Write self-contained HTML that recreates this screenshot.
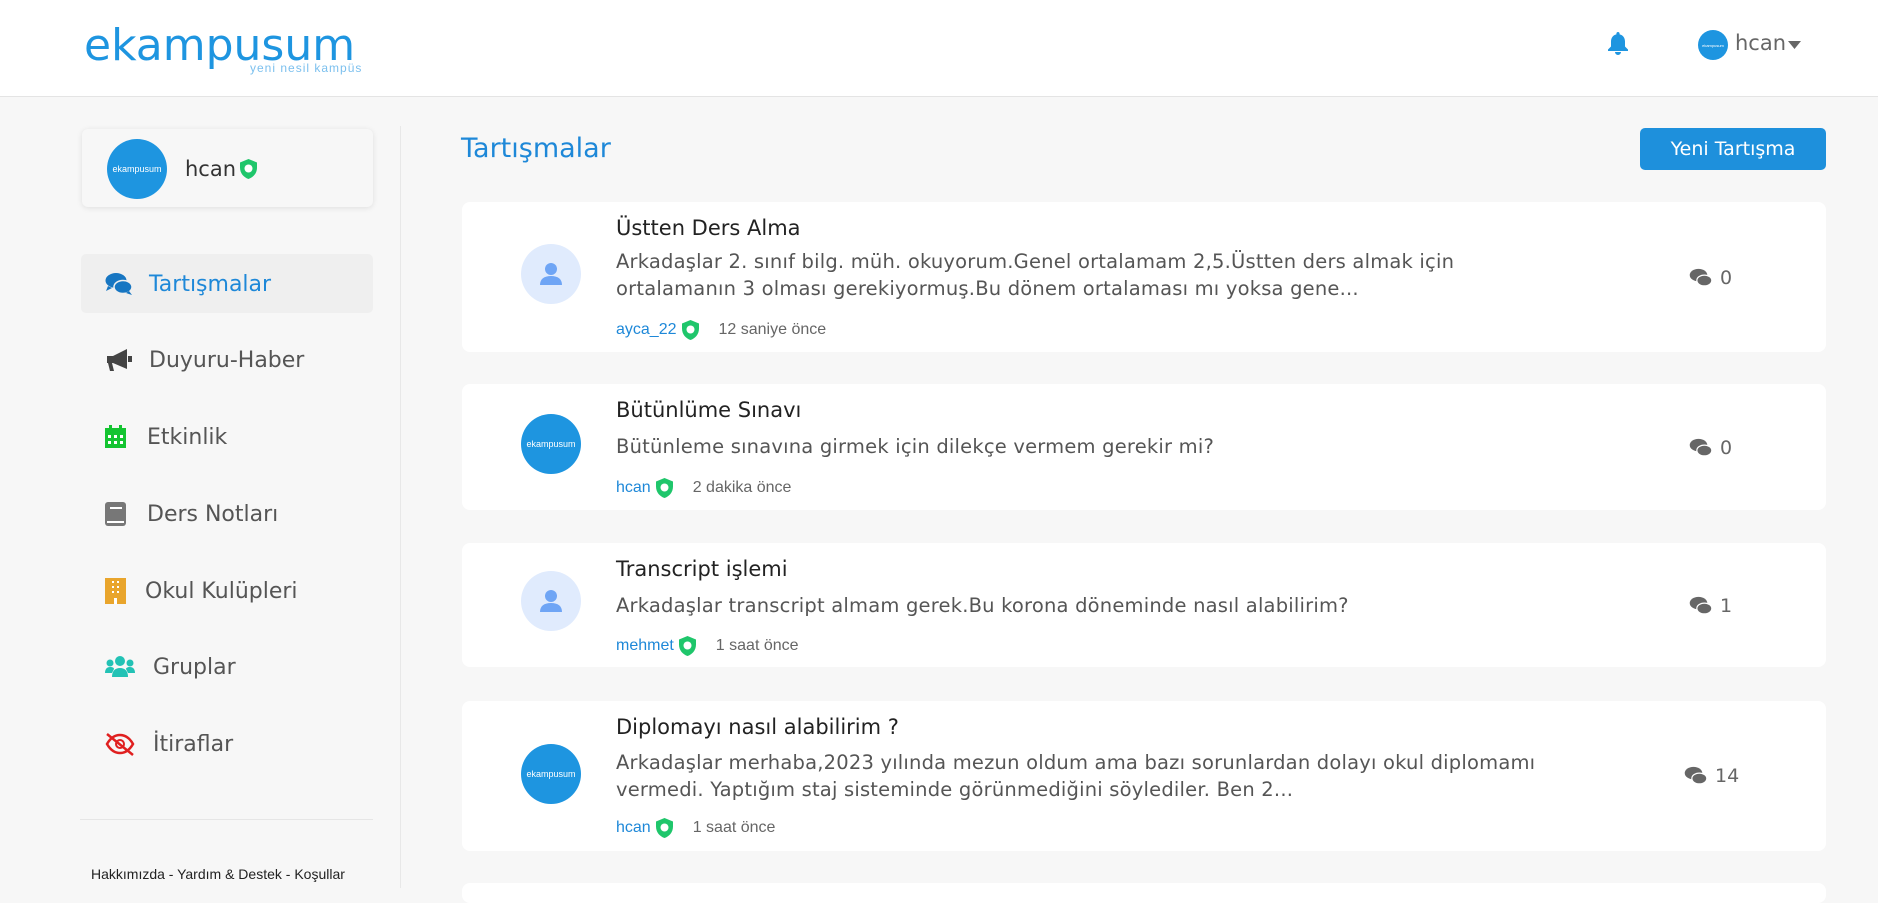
<!DOCTYPE html>
<html><head><meta charset="utf-8"><style>
*{margin:0;padding:0;box-sizing:border-box}
body{width:1878px;height:888px;overflow:hidden;background:#f7f7f7;font-family:"Liberation Sans",sans-serif;position:relative}
.hdr{position:absolute;left:0;top:0;width:1878px;height:97px;background:#fff;border-bottom:1px solid #e4e4e4}
.abs{position:absolute}
.dv{font-family:"DejaVu Sans",sans-serif}
.av{position:absolute;border-radius:50%;background:#1e95e0;color:#fff;font-size:9px;display:flex;align-items:center;justify-content:center}
.nav{position:absolute;left:105px;font-size:22px;color:#555;display:flex;align-items:center;height:40px;font-family:"DejaVu Sans",sans-serif}
.nav svg{margin-right:16px}
.card{position:absolute;left:462px;width:1364px;background:#fff;border-radius:8px}
.t{position:absolute;left:154px;font-size:21px;color:#222;font-family:"DejaVu Sans",sans-serif}
.b{position:absolute;left:154px;font-size:19.5px;color:#555;line-height:27px;font-family:"DejaVu Sans",sans-serif;letter-spacing:0.2px}
.m{position:absolute;left:154px;font-size:16px;display:flex;align-items:center}
.m .u{color:#1e88d8}
.m .d{color:#666;margin-left:20px}
.c{position:absolute;font-size:19px;color:#666;display:flex;align-items:center;font-family:"DejaVu Sans",sans-serif}
.pa{position:absolute;left:-90px;width:60px;height:60px;border-radius:50%}
</style></head><body>
<div class="hdr">
 <div class="abs" style="left:84px;top:20px;font-size:44px;color:#1e95e0;letter-spacing:0px;font-family:'DejaVu Sans',sans-serif">ekampusum</div>
 <div class="abs" style="left:250px;top:61px;font-size:12px;color:#7cc0ee;letter-spacing:1px">yeni nesil kampüs</div>
 <svg class="abs" style="left:1608px;top:32px" width="20" height="24" viewBox="0 0 20 24"><path d="M10 0c1 0 1.6.8 1.6 1.6v.8C15 3 17 6 17 9.5v5l3 3v1.5H0v-1.5l3-3v-5C3 6 5 3 8.4 2.4v-.8C8.4.8 9 0 10 0zM7 20h6a3 3 0 0 1-6 0z" fill="#1e95e0"/></svg>
 <div class="av" style="left:1698px;top:30px;width:30px;height:30px;font-size:4px">ekampusum</div>
 <div class="abs dv" style="left:1735px;top:31px;font-size:21px;color:#666">hcan</div>
 <svg class="abs" style="left:1788px;top:41px" width="13" height="8"><path d="M0 0h13L6.5 8z" fill="#666"/></svg>
</div>
<div class="abs" style="left:82px;top:129px;width:291px;height:78px;background:#f7f7f7;border-radius:6px;box-shadow:0 1px 6px rgba(0,0,0,.1)"></div>
<div class="av" style="left:107px;top:139px;width:60px;height:60px">ekampusum</div>
<div class="abs dv" style="left:185px;top:157px;font-size:21px;color:#333">hcan</div>
<svg class="abs" style="left:240px;top:159px" width="17" height="20" viewBox="0 0 17 20"><path d="M8.5 0L17 3.5v5c0 6-4 10-8.5 11.5C4 18.5 0 14.5 0 8.5v-5z" fill="#1fc66b"/><circle cx="8.5" cy="9.5" r="4" fill="#fff"/></svg>
<div class="abs" style="left:400px;top:126px;width:1px;height:762px;background:#e8e8e8"></div>
<div class="abs" style="left:81px;top:254px;width:292px;height:59px;background:#efefef;border-radius:5px"></div>
<div class="nav" style="top:264px;color:#1e88d8"><svg width="28" height="24" viewBox="0 0 28 24"><ellipse cx="11" cy="8.5" rx="10.5" ry="7.5" fill="#1776c2"/><path d="M3 14l-2 5 6-3z" fill="#1776c2"/><ellipse cx="18" cy="15" rx="9" ry="6.5" fill="#1776c2" stroke="#efefef" stroke-width="1.5"/><path d="M24 19l3 4-6-2z" fill="#1776c2"/></svg>Tartışmalar</div>
<div class="nav" style="top:340px"><svg width="28" height="24" viewBox="0 0 28 24"><path d="M2 8h6l14-7v20L8 15H7l2 8H5l-2-8H2z" fill="#444"/><rect x="23" y="8" width="4" height="6" fill="#444"/></svg>Duyuru-Haber</div>
<div class="nav" style="top:417px"><svg width="22" height="24" viewBox="0 0 22 24" style="margin-right:20px"><rect x="0" y="3" width="21" height="20" fill="#14c431"/><rect x="4" y="0" width="3" height="5" fill="#14c431"/><rect x="14" y="0" width="3" height="5" fill="#14c431"/><g fill="#fff"><rect x="3" y="10" width="3" height="3"/><rect x="9" y="10" width="3" height="3"/><rect x="15" y="10" width="3" height="3"/><rect x="3" y="16" width="3" height="3"/><rect x="9" y="16" width="3" height="3"/><rect x="15" y="16" width="3" height="3"/></g></svg>Etkinlik</div>
<div class="nav" style="top:494px"><svg width="22" height="24" viewBox="0 0 22 24" style="margin-right:20px"><rect x="0" y="0" width="21" height="24" rx="3" fill="#777"/><rect x="5" y="5" width="12" height="2" fill="#fff"/><rect x="2" y="19" width="17" height="2" fill="#fff"/></svg>Ders Notları</div>
<div class="nav" style="top:571px"><svg width="22" height="26" viewBox="0 0 22 26" style="margin-right:18px"><rect x="0" y="0" width="21" height="26" fill="#e9a52c"/><g fill="#fff"><rect x="7" y="3" width="2" height="2"/><rect x="12" y="3" width="2" height="2"/><rect x="7" y="8" width="2" height="2"/><rect x="12" y="8" width="2" height="2"/><rect x="7" y="13" width="2" height="2"/><rect x="12" y="13" width="2" height="2"/><rect x="9" y="20" width="3" height="6"/></g></svg>Okul Kulüpleri</div>
<div class="nav" style="top:647px"><svg width="30" height="24" viewBox="0 0 30 24" style="margin-right:18px"><g fill="#22c2b5"><circle cx="15" cy="6" r="5"/><circle cx="5" cy="8" r="3.5"/><circle cx="25" cy="8" r="3.5"/><path d="M7 22c0-6 3-9 8-9s8 3 8 9z"/><path d="M0 18c0-4 2-6 5-6s4 1 4 2l-2 4z"/><path d="M30 18c0-4-2-6-5-6s-4 1-4 2l2 4z"/></g></svg>Gruplar</div>
<div class="nav" style="top:724px"><svg width="30" height="24" viewBox="0 0 30 24" style="margin-right:18px"><path d="M2 12C6 5 11 3 15 3s9 2 13 9c-4 7-9 9-13 9S6 19 2 12z" fill="none" stroke="#e02020" stroke-width="2.5"/><circle cx="15" cy="12" r="4" fill="none" stroke="#e02020" stroke-width="2"/><path d="M2 2l26 21" stroke="#e02020" stroke-width="2.5"/></svg>İtiraflar</div>
<div class="abs" style="left:80px;top:819px;width:293px;height:1px;background:#e6e6e6"></div>
<div class="abs" style="left:91px;top:866px;font-size:14px;color:#222">Hakkımızda - Yardım &amp; Destek - Koşullar</div>
<div class="abs dv" style="left:461px;top:133px;font-size:27px;color:#1e88d8">Tartışmalar</div>
<div class="abs dv" style="left:1640px;top:128px;width:186px;height:42px;background:#1e90dc;border-radius:5px;color:#fff;font-size:19px;display:flex;align-items:center;justify-content:center">Yeni Tartışma</div>

<div class="card" style="top:202px;height:150px">
 <div class="pa" style="top:42px;left:59px;background:#e0ebfd"><svg width="60" height="60"><circle cx="30" cy="25" r="6" fill="#6fa5f5"/><path d="M19 41c0-6 4-9 11-9s11 3 11 9z" fill="#6fa5f5"/></svg></div>
 <div class="t" style="top:14px">Üstten Ders Alma</div>
 <div class="b" style="top:46px">Arkadaşlar 2. sınıf bilg. müh. okuyorum.Genel ortalamam 2,5.Üstten ders almak için<br>ortalamanın 3 olması gerekiyormuş.Bu dönem ortalaması mı yoksa gene...</div>
 <div class="m" style="top:118px"><span class="u">ayca_22</span><svg style="margin-left:5px" width="17" height="20" viewBox="0 0 17 20"><path d="M8.5 0L17 3.5v5c0 6-4 10-8.5 11.5C4 18.5 0 14.5 0 8.5v-5z" fill="#1fc66b"/><circle cx="8.5" cy="9.5" r="4" fill="#fff"/></svg><span class="d">12 saniye önce</span></div>
 <div class="c" style="left:1226px;top:65px"><svg width="26" height="20" viewBox="0 0 28 24"><ellipse cx="11" cy="8.5" rx="10.5" ry="7.5" fill="#666"/><ellipse cx="18" cy="15" rx="9" ry="6.5" fill="#666" stroke="#fff" stroke-width="1.5"/></svg>&nbsp;0</div>
</div>
<div class="card" style="top:384px;height:126px">
 <div class="av" style="top:30px;left:59px;width:60px;height:60px">ekampusum</div>
 <div class="t" style="top:14px">Bütünlüme Sınavı</div>
 <div class="b" style="top:49px">Bütünleme sınavına girmek için dilekçe vermem gerekir mi?</div>
 <div class="m" style="top:94px"><span class="u">hcan</span><svg style="margin-left:5px" width="17" height="20" viewBox="0 0 17 20"><path d="M8.5 0L17 3.5v5c0 6-4 10-8.5 11.5C4 18.5 0 14.5 0 8.5v-5z" fill="#1fc66b"/><circle cx="8.5" cy="9.5" r="4" fill="#fff"/></svg><span class="d">2 dakika önce</span></div>
 <div class="c" style="left:1226px;top:53px"><svg width="26" height="20" viewBox="0 0 28 24"><ellipse cx="11" cy="8.5" rx="10.5" ry="7.5" fill="#666"/><ellipse cx="18" cy="15" rx="9" ry="6.5" fill="#666" stroke="#fff" stroke-width="1.5"/></svg>&nbsp;0</div>
</div>
<div class="card" style="top:543px;height:124px">
 <div class="pa" style="top:28px;left:59px;background:#e0ebfd"><svg width="60" height="60"><circle cx="30" cy="25" r="6" fill="#6fa5f5"/><path d="M19 41c0-6 4-9 11-9s11 3 11 9z" fill="#6fa5f5"/></svg></div>
 <div class="t" style="top:14px">Transcript işlemi</div>
 <div class="b" style="top:49px">Arkadaşlar transcript almam gerek.Bu korona döneminde nasıl alabilirim?</div>
 <div class="m" style="top:93px"><span class="u">mehmet</span><svg style="margin-left:5px" width="17" height="20" viewBox="0 0 17 20"><path d="M8.5 0L17 3.5v5c0 6-4 10-8.5 11.5C4 18.5 0 14.5 0 8.5v-5z" fill="#1fc66b"/><circle cx="8.5" cy="9.5" r="4" fill="#fff"/></svg><span class="d">1 saat önce</span></div>
 <div class="c" style="left:1226px;top:52px"><svg width="26" height="20" viewBox="0 0 28 24"><ellipse cx="11" cy="8.5" rx="10.5" ry="7.5" fill="#666"/><ellipse cx="18" cy="15" rx="9" ry="6.5" fill="#666" stroke="#fff" stroke-width="1.5"/></svg>&nbsp;1</div>
</div>
<div class="card" style="top:701px;height:150px">
 <div class="av" style="top:43px;left:59px;width:60px;height:60px">ekampusum</div>
 <div class="t" style="top:14px">Diplomayı nasıl alabilirim ?</div>
 <div class="b" style="top:48px">Arkadaşlar merhaba,2023 yılında mezun oldum ama bazı sorunlardan dolayı okul diplomamı<br>vermedi. Yaptığım staj sisteminde görünmediğini söylediler. Ben 2...</div>
 <div class="m" style="top:117px"><span class="u">hcan</span><svg style="margin-left:5px" width="17" height="20" viewBox="0 0 17 20"><path d="M8.5 0L17 3.5v5c0 6-4 10-8.5 11.5C4 18.5 0 14.5 0 8.5v-5z" fill="#1fc66b"/><circle cx="8.5" cy="9.5" r="4" fill="#fff"/></svg><span class="d">1 saat önce</span></div>
 <div class="c" style="left:1221px;top:64px"><svg width="26" height="20" viewBox="0 0 28 24"><ellipse cx="11" cy="8.5" rx="10.5" ry="7.5" fill="#666"/><ellipse cx="18" cy="15" rx="9" ry="6.5" fill="#666" stroke="#fff" stroke-width="1.5"/></svg>&nbsp;14</div>
</div>
<div class="card" style="top:883px;height:20px"></div>
</body></html>
